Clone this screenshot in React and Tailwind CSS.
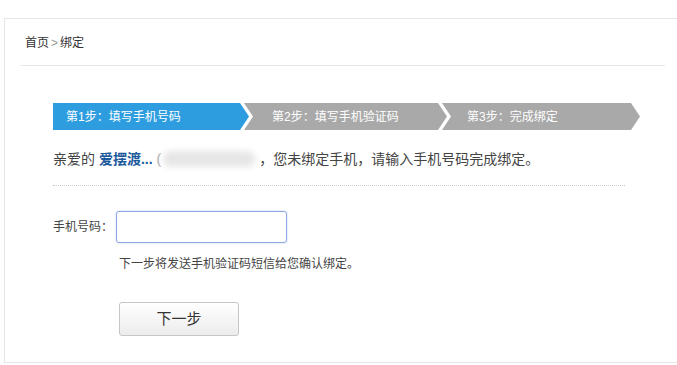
import React from 'react';

const FONT = "font-['Liberation_Sans','Noto_Sans_CJK_SC',sans-serif]";

function Steps() {
  return (
    <div className="flex h-[27px]">
      <div className="w-[196px] h-full bg-[#2d9de0] text-white text-[12px] flex items-center pl-[13px] [clip-path:polygon(0_0,187px_0,100%_50%,187px_100%,0_100%)]">
        第1步：填写手机号码
      </div>
      <div className="-ml-[5px] w-[203px] h-full bg-[#a9a9a9] text-white text-[12px] flex items-center pl-[28px] [clip-path:polygon(0_0,194px_0,100%_50%,194px_100%,0_100%,9px_50%)]">
        第2步：填写手机验证码
      </div>
      <div className="-ml-[5px] w-[198px] h-full bg-[#a9a9a9] text-white text-[12px] flex items-center pl-[25px] [clip-path:polygon(0_0,189px_0,100%_50%,189px_100%,0_100%,9px_50%)]">
        第3步：完成绑定
      </div>
    </div>
  );
}

export default function App() {
  return (
    <div className={`w-full h-[365px] overflow-hidden bg-white text-[#333] ${FONT}`}>
      <div className="ml-[4px] mt-[18px] w-[700px] h-[345px] border border-[#e6e6e6]">
        {/* breadcrumb */}
        <div className="pl-[20px] pt-[16px] h-[46px] text-[12px] leading-[16px] text-[#333]">
          首页<span className="text-[#999] px-[2px]">&gt;</span>绑定
        </div>
        <div className="ml-[15px] w-[645px] border-t border-[#e8e8e8]" />

        <div className="pl-[48px] pt-[37px]">
          <Steps />

          {/* greeting */}
          <div className="mt-[19px] text-[14px] leading-[20px] text-[#444] flex items-center whitespace-nowrap">
            <span>亲爱的&nbsp;</span>
            <span className="font-bold text-[#1d5a9b]">爱摆渡...</span>
            <span className="text-[#aaa] ml-[4px]">(</span>
            <span className="inline-block w-[92px] h-[16px] ml-[2px] rounded-full bg-[#e6e6e6] blur-[3px]" />
            <span className="ml-[4px]">，您未绑定手机，请输入手机号码完成绑定。</span>
          </div>

          <div className="mt-[16px] w-[572px] border-t border-dotted border-[#c8c8c8]" />

          {/* phone input */}
          <div className="mt-[25px] flex items-center">
            <label className="w-[63px] text-[12px] text-[#444]">手机号码：</label>
            <input
              type="text"
              className="w-[171px] h-[32px] border border-[#8ea8e6] rounded-[3px] shadow-[0_0_2px_#b9c9f2] outline-none px-2 text-[13px]"
            />
          </div>
          <div className="mt-[13px] ml-[66px] text-[12px] leading-[16px] text-[#444]">
            下一步将发送手机验证码短信给您确认绑定。
          </div>

          <button className="mt-[30px] ml-[66px] w-[120px] h-[34px] rounded-[3px] border border-[#c6c6c6] bg-gradient-to-b from-white to-[#ececec] text-[15px] text-[#333]">
            下一步
          </button>
        </div>
      </div>
    </div>
  );
}
